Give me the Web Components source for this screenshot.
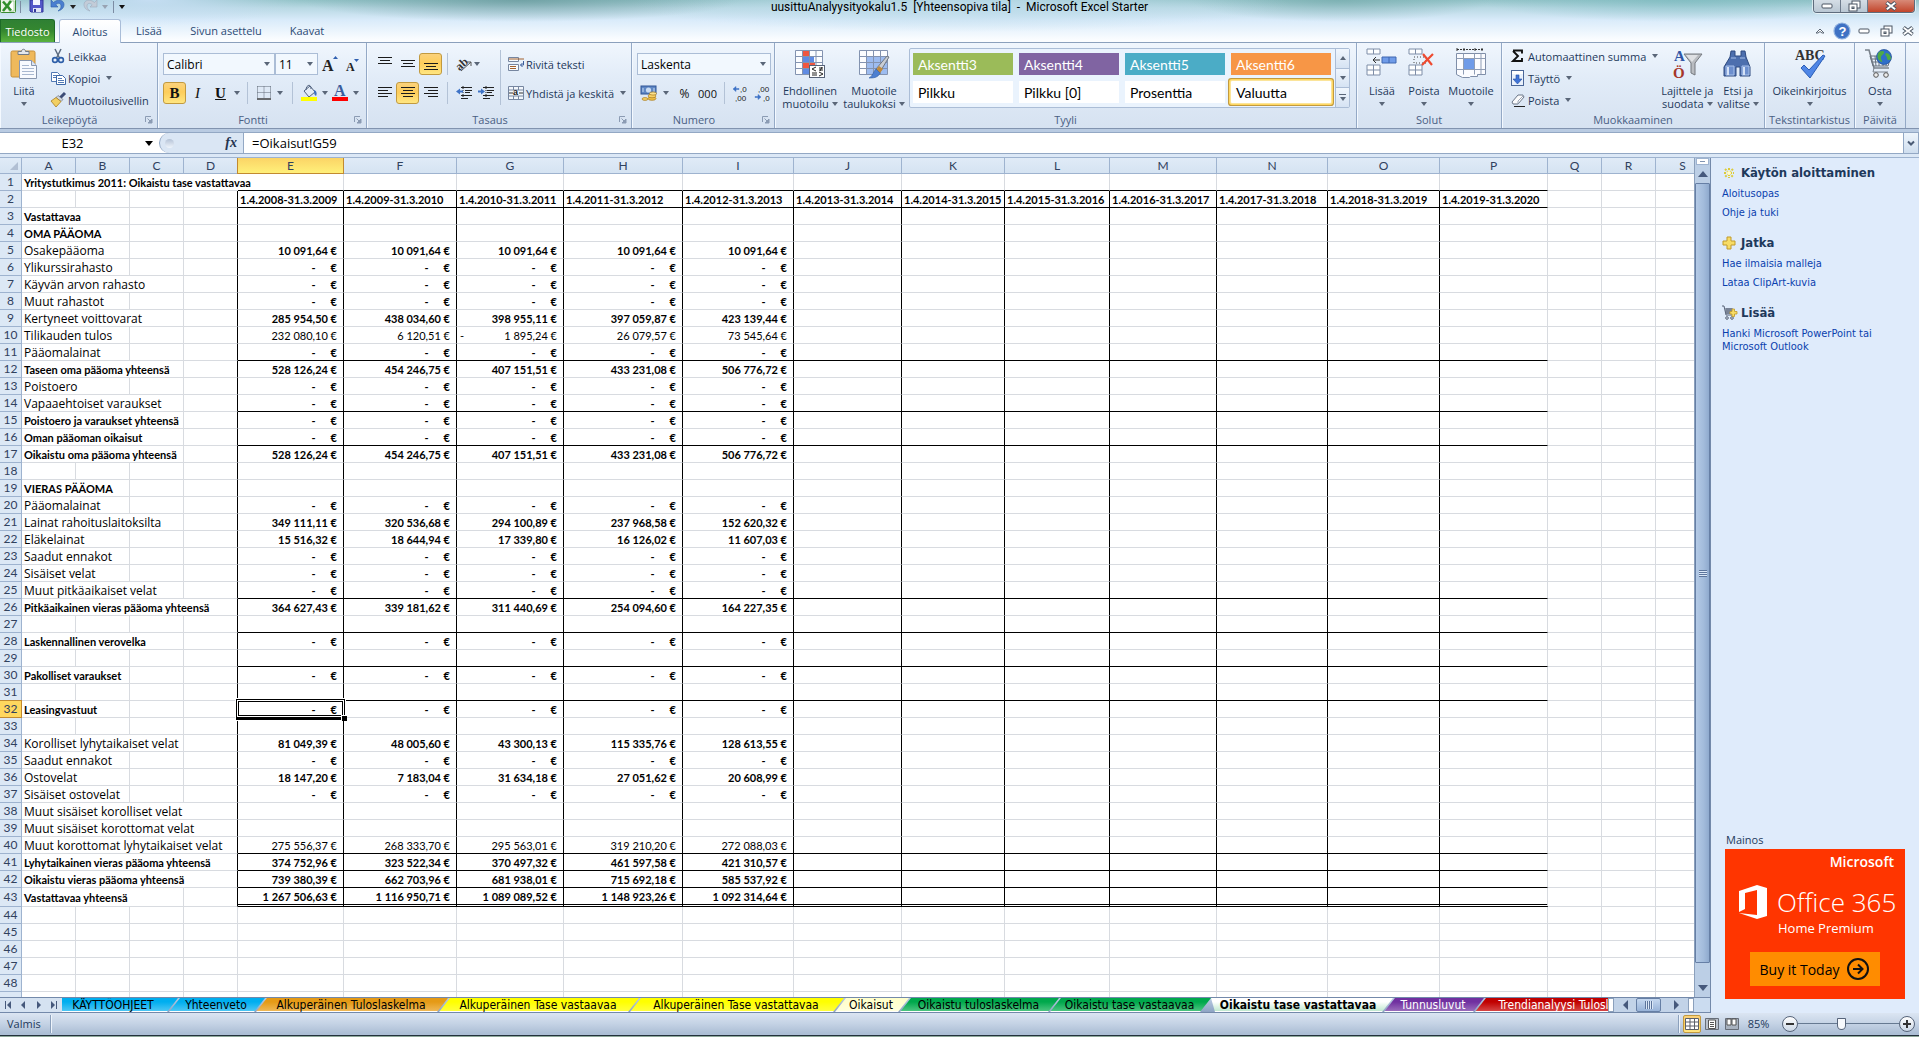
<!DOCTYPE html>
<html lang="fi">
<head>
<meta charset="utf-8">
<title>uusittuAnalyysityokalu1.5 - Microsoft Excel Starter</title>
<style>
html,body{height:100%;margin:0;overflow:hidden;background:#fff}
body{font-family:"Open Sans","Noto Sans",sans-serif;font-size:11px;color:#1e395b;
--ui:"Open Sans","Noto Sans",sans-serif;--cell:Lato,"Open Sans",sans-serif;--pane:"DejaVu Sans Condensed","DejaVu Sans",sans-serif;
--line:#8ba0bc;--gold:linear-gradient(#fbd27c,#fdcd5b 45%,#ffe681)}
</style>
</head>
<body>
<excel-window></excel-window>
<script>
const BASE = `
*{box-sizing:border-box}
button,select,input{font:inherit;color:inherit;margin:0;padding:0;border:0;background:none;outline:0}
button{display:flex;align-items:center;justify-content:center;white-space:nowrap}
.caret{display:inline-block;width:0;height:0;border:3px solid transparent;border-top:4px solid #5a6678;border-bottom:0;flex:none}
svg{display:block;overflow:visible}
`;
function define(name, css, html, extra) {
  const t = document.createElement('template');
  t.innerHTML = `<style>${BASE}${css}</style>${html}`;
  customElements.define(name, class extends HTMLElement {
    constructor() {
      super();
      this.attachShadow({mode: 'open'}).append(t.content.cloneNode(true));
    }
    connectedCallback() { if (extra && !this.ready) { this.ready = true; extra.call(this, this.shadowRoot); } }
  });
}

const lines = (ys) => ys.map(([y, a, b]) => `<path d="M${a} ${y}.5H${b}" stroke="#1b1b1b"/>`).join('');
const sheetRows = `<path d="M1 1h13v5H1zM1 17h13v10H1zM1 22h13M7.500 1v5M7.500 17v10" fill="#fdfeff" stroke="#7f8ea8"/>`;
const cart = `<path d="M1 2h4l5 18h15" fill="none" stroke="#7a828c" stroke-width="1.600"/><path d="M6 8h21l-3 10H9zM8 11h18M9 14h16M11 8l1 10M15 8v10M19 8v10M23 8l-1 10" fill="none" stroke="#68727e"/><path d="M10 20l-1 4h15" fill="none" stroke="#7a828c"/><circle cx="12" cy="27" r="2.300" fill="#eee" stroke="#555"/><circle cx="22" cy="27" r="2.300" fill="#eee" stroke="#555"/>`;
const ICONS = {
  excel: [16, 16, `<rect x=".5" y=".5" width="15" height="13" rx="1" fill="#e9f3e6" stroke="#3a8a33"/><path d="M9 2h5v10H9z" fill="#fff" stroke="#8bbf84" stroke-width=".7"/><path d="M3 2.500l8 9M11 2L3 12" stroke="#2f8f2b" stroke-width="2.600"/>`],
  save: [16, 16, `<path d="M2 1h13v12H3l-1-1z" fill="#5358c8" stroke="#34389a"/><path d="M5 1h7v5H5z" fill="#f2f5ff"/><path d="M5 9h8v4H5z" fill="#dfe4f5"/><path d="M6 10h2v3H6z" fill="#34389a"/>`],
  undo: [16, 16, `<path d="M1 1v7h7L5.800 5.800C8 3.500 11 4 11 7c0 2-1 3.500-3 5 4-1 6-3.500 6-6.500C14 1 8-.5 3.500 3.500z" fill="#4a7fd0" stroke="#2c5da8" stroke-width=".6"/>`],
  redo: [16, 16, `<path d="M15 1v7H8l2.200-2.200C8 3.500 5 4 5 7c0 2 1 3.500 3 5-4-1-6-3.500-6-6.500C2 1 8-.5 12.500 3.500z" fill="#c3ccd8" stroke="#9dabbd" stroke-width=".6"/>`],
  paste: [32, 32, `<rect x="3" y="3" width="24" height="26" rx="1.500" fill="#efb95c" stroke="#c58f3a"/><path d="M10 6.500V3.500h3.500c0-3 4-3 4 0H21v3z" fill="#e4e7ec" stroke="#717a87"/><path d="M11.500 12.500h12l5 5v13h-17z" fill="#f8fafe" stroke="#8896ae"/><path d="M23.500 12.500v5h5" fill="#dbe4f2" stroke="#8896ae"/><path d="M14 17.500h7M14 20.500h12M14 23.500h12M14 26.500h12" stroke="#a9b8d0"/>`],
  cut: [16, 16, `<path d="M5 1l4.500 9M11 1L6.500 10" stroke="#5b6b80" stroke-width="1.500" fill="none"/><circle cx="5" cy="12" r="2.400" fill="none" stroke="#2d5ea8" stroke-width="1.600"/><circle cx="11" cy="12" r="2.400" fill="none" stroke="#2d5ea8" stroke-width="1.600"/>`],
  copy: [16, 16, `<path d="M1.500 2.500h6l2 2v7h-8z" fill="#fff" stroke="#5179b4"/><path d="M3 5.500h4M3 7.500h5" stroke="#5179b4"/><path d="M6.500 5.500h6l3 3v6h-9z" fill="#fff" stroke="#3d68a8"/><path d="M8 8.500h4M8 10.500h6M8 12.500h6" stroke="#5179b4"/>`],
  brush: [16, 16, `<path d="M15 1l-5 5" stroke="#3c4c77" stroke-width="3"/><path d="M8 3.500l5 4-2 2-5-4z" fill="#cfd5de" stroke="#6a7382" stroke-width=".7"/><path d="M6 5.500L1 9l5 6 5-5.500z" fill="#f2cf62" stroke="#a87e22" stroke-width=".8"/>`],
  growA: [16, 16, `<text x="0" y="15" font-family="Liberation Serif" font-weight="bold" font-size="16" fill="#222">A</text><path d="M11 3l2.500-3L16 3z" fill="#2f5fb0"/>`],
  shrinkA: [16, 16, `<text x="1" y="15" font-family="Liberation Serif" font-weight="bold" font-size="12" fill="#222">A</text><path d="M9 3h5l-2.500 3z" fill="#2f5fb0"/>`],
  borders: [16, 16, `<path d="M1.500 1.500h13M1.500 1.500v12M14.500 1.500v12M8 1.500v12M1.500 7.500h13" stroke="#5c6675" stroke-dasharray="1 1" fill="none"/><path d="M1 14h14" stroke="#333" stroke-width="1.400"/>`],
  fill: [16, 18, `<path d="M3 7l6-5 5 6-6 5z" fill="#e3ebf5" stroke="#50617e"/><path d="M5 6c0-5 5-7 5-1" fill="none" stroke="#50617e"/><path d="M13 6c3 1 3 4 2 6-2-1-2-3-2-6z" fill="#3e6fbd"/><path d="M0 13h16v4H0z" fill="#ff0"/>`],
  fontA: [16, 18, `<text x="2" y="12" font-family="Liberation Serif" font-weight="bold" font-size="16" fill="#3b5d9c">A</text><path d="M0 13h16v4H0z" fill="red"/>`],
  atop: [16, 16, lines([[1, 1, 15], [4, 3, 13], [7, 1, 15]])],
  amid: [16, 16, lines([[4, 1, 15], [7, 3, 13], [10, 1, 15]])],
  abot: [16, 16, lines([[7, 1, 15], [10, 3, 13], [13, 1, 15]])],
  left: [16, 16, lines([[2, 1, 15], [5, 1, 11], [8, 1, 15], [11, 1, 11]])],
  center: [16, 16, lines([[2, 1, 15], [5, 3, 13], [8, 1, 15], [11, 3, 13]])],
  right: [16, 16, lines([[2, 1, 15], [5, 5, 15], [8, 1, 15], [11, 5, 15]])],
  orient: [16, 16, `<text x="0" y="12" transform="rotate(-42 6 9)" font-family="Liberation Serif" font-weight="bold" font-size="12" fill="#333">ab</text><path d="M5 15l10-9M11 6h4v4" fill="none" stroke="#555"/>`],
  outdent: [16, 16, `<path d="M5 2.500h11M9 5.500h7M9 7.500h5M5 10.500h11M5 13.500h7" stroke="#222"/><path d="M7 1v14" stroke="#222" stroke-dasharray="1 1"/><path d="M0 6.500l4-3v2h3v2H4v2z" fill="#3f73c6"/>`],
  indent: [16, 16, `<path d="M5 2.500h11M9 5.500h7M9 7.500h5M5 10.500h11M5 13.500h7" stroke="#222"/><path d="M8 1v14" stroke="#222" stroke-dasharray="1 1"/><path d="M7 6.500l-4-3v2H0v2h3v2z" fill="#3f73c6"/>`],
  wrap: [16, 16, `<path d="M.5 1.500h10v4h-10zM.5 8.500h10v6h-10z" fill="#f7fafd" stroke="#7686a0"/><path d="M1 3h15M2 10.500h6M2 12.500h6" stroke="#a3612c"/><path d="M15.500 5v4h-3l2-2M12.500 9l2 2" fill="none" stroke="#3b5d9c"/>`],
  merge: [16, 16, `<path d="M.5 1.500h15v13H.5zM.5 5h15M.5 11h15M5.500 1.500V5M10.500 1.500V5M5.500 11v3.500M10.500 11v3.500" fill="#f3f7fc" stroke="#7686a0"/><text x="5" y="10" font-family="Liberation Sans" font-weight="bold" font-size="9" fill="#222">a</text><path d="M1 8h4M11 8h4" stroke="#333"/>`],
  money: [18, 16, `<rect x="1" y="1" width="15" height="8" fill="#5f87c4" stroke="#2f5596"/><circle cx="8.500" cy="5" r="2.600" fill="#c9dcf3"/><path d="M3 3v4M14 3v4" stroke="#c9dcf3"/><ellipse cx="12" cy="13.500" rx="4" ry="1.800" fill="#f0bf45" stroke="#a77a1c" stroke-width=".7"/><ellipse cx="12" cy="11" rx="4" ry="1.800" fill="#f7d166" stroke="#a77a1c" stroke-width=".7"/><ellipse cx="13" cy="8.500" rx="3.500" ry="1.600" fill="#fbe08a" stroke="#a77a1c" stroke-width=".7"/><ellipse cx="5" cy="14" rx="3" ry="1.400" fill="#f7d166" stroke="#a77a1c" stroke-width=".7"/>`],
  decinc: [16, 16, `<path d="M0 4l3-2.500v2h3v1H3v2z" fill="#3f73c6" stroke="#3f73c6" stroke-width=".5"/><text x="7" y="7" font-size="8" font-family="Liberation Sans" fill="#222">,0</text><text x="2" y="16" font-size="8" font-family="Liberation Sans" fill="#222">,00</text>`],
  decdec: [16, 16, `<text x="3" y="7" font-size="8" font-family="Liberation Sans" fill="#222">,00</text><path d="M6 12l-3-2.500v2H0v1h3v2z" fill="#3f73c6" stroke="#3f73c6" stroke-width=".5"/><text x="8" y="16" font-size="8" font-family="Liberation Sans" fill="#222">,0</text>`],
  cond: [32, 32, `<path d="M1.500 2.500h27v24h-27z" fill="#fcfdff"/><path d="M8 2h7v6H8zM8 14h13v6H8z" fill="#f0563f"/><path d="M8 8h12v6H8zM8 20h7v7H8z" fill="#5f8be3"/><path d="M1.500 2.500h27v24h-27zM1.500 8.500h27M1.500 14.500h27M1.500 20.500h27M8.500 2.500v24M15.500 2.500v24M22 2.500v24" fill="none" stroke="#8393b0"/><rect x="15.500" y="17.500" width="15" height="12" fill="#fff" stroke="#566278"/><path d="M22 19l-4 2 4 2M18 25h5M18 27h5M25 20h4M25 22h4M28 19l-2 4M25 24l4 2-4 2" stroke="#222" fill="none"/>`],
  table: [32, 32, `<path d="M1.500 2.500h28v24h-28z" fill="#fcfdff"/><path d="M8 8h21v18H8z" fill="#9dbcf0"/><path d="M1.500 2.500h28v24h-28zM1.500 8.500h28M1.500 14.500h28M1.500 20.500h28M8.500 2.500v24M15.500 2.500v24M22.500 2.500v24" fill="none" stroke="#8393b0"/><path d="M29 8l2 1-9 15-4-3z" fill="#c9cdd3" stroke="#6f7680"/><path d="M21 18l4 3-3 4-4-3z" fill="#c08a3c"/><path d="M18 21l4 4c-2 5-7 5-11 5 4-2 4-6 7-9z" fill="#4c7fd1" stroke="#2f5da5" stroke-width=".6"/>`],
  insert: [32, 32, sheetRows + `<path d="M16 9h14v6H16zM23 9v6" fill="#6f9be8" stroke="#3e66b0"/><path d="M14 12H7m3-3l-3 3 3 3" stroke="#333" fill="none"/>`],
  del: [32, 32, sheetRows + `<path d="M6 9h12v6H6z" fill="none" stroke="#444" stroke-dasharray="1 2"/><path d="M15 6l9 11M25 6L14 17" stroke="#ee4a30" stroke-width="2.200"/>`],
  format: [32, 32, `<path d="M2 1.500h26" stroke="#333" stroke-dasharray="2 1"/><path d="M2 0v3M9 0v3M20 0v3M27 0v3" stroke="#333"/><path d="M1.500 5.500h29v21h-8v2h-7l-1 1h-7l-6-3z" fill="#fbfcff" stroke="#7f8ea8"/><path d="M9 11h10v10H9z" fill="#6f9be8"/><path d="M1.500 10.500h29M1.500 21.500h29M8.500 5.500v21M19.500 5.500v21M26 5.500v21" fill="none" stroke="#8f9db5"/>`],
  sigma: [16, 16, `<path d="M3 2.500h9v3M3 3l5 5-5 5h9v-3" fill="none" stroke="#111" stroke-width="1.900"/>`],
  down: [16, 16, `<rect x="1.500" y=".5" width="12" height="15" fill="#e9f1fc" stroke="#4a6698"/><path d="M2 1h11v3H2z" fill="#fff"/><path d="M6 5h3v4h3l-4.500 5L3 9h3z" fill="#3f73d6" stroke="#2550a5" stroke-width=".6"/>`],
  eraser: [16, 16, `<path d="M2 10l6-7h5l1 2-6 7H3z" fill="#fbfbfc" stroke="#6b7688"/><path d="M8 12V9l6-6" fill="none" stroke="#9aa5b5"/><path d="M4 14.500h11" stroke="#222"/>`],
  sort: [32, 32, `<text x="3" y="13" font-family="Liberation Serif" font-weight="bold" font-size="15" fill="#2f56a5">A</text><text x="2" y="30" font-family="Liberation Serif" font-weight="bold" font-size="15" fill="#a5352a">Ö</text><path d="M13 6h18l-7 9v12l-4-2V15z" fill="#b9bcc1" stroke="#75797f"/><path d="M15 7h12l-6 7z" fill="#dfe1e4"/>`],
  find: [32, 32, `<path d="M9 3h4v5h6V3h4l1 6 4 10v9H18v-9h-4v9H2v-9L8 9z" fill="#4d6fae" stroke="#2e4a80"/><path d="M9 10h5M18 10h5M4 18h8v9H4zM20 18h7v9h-7z" stroke="#a9c1ea" fill="#6d8fce"/><path d="M5 19h2v8H5zM21 19h2v8h-2z" fill="#d5e2f7"/>`],
  spell: [32, 32, `<text x="1" y="12" font-family="Liberation Serif" font-weight="bold" font-size="14" fill="#333">ABC</text><path d="M7 20l3-3 5 5L29 7l2 1-15 22z" fill="#4f86e6" stroke="#2a5cb5"/>`],
  buy: [32, 32, cart + `<circle cx="20" cy="9" r="7.500" fill="#2f6fc9" stroke="#1d4a94" stroke-width=".7"/><path d="M15 4c3-2 6-1 5 1s-3 2-3 5 2 2 1 4c-4-1-6-6-3-10zM22 5c3 0 5 3 5 6-2 2-4 1-4-1s-3-3-1-5z" fill="#4faa45"/>`],
  help: [18, 18, `<circle cx="9" cy="9" r="8" fill="#3f72c4" stroke="#8fb1e0" stroke-width="1.200"/><text x="5.500" y="14" font-family="Liberation Sans" font-weight="bold" font-size="13" fill="#fff">?</text>`],
  up: [12, 12, `<path d="M2 8l4-4 4 4H8L6 6.500 4 8z" fill="#fff" stroke="#5b6675"/>`],
  min: [12, 12, `<rect x="1" y="4" width="10" height="4" rx="1" fill="#fff" stroke="#4a5563"/>`],
  restore: [12, 12, `<rect x="4" y="1" width="8" height="7" fill="#fff" stroke="#4a5563"/><rect x="1" y="4" width="8" height="7" fill="#fff" stroke="#4a5563"/><rect x="4" y="7" width="2" height="1.500" fill="none" stroke="#4a5563"/>`],
  close: [12, 12, `<path d="M1.500 2.500L10.500 9.500M10.500 2.500L1.500 9.500" stroke="#4a5563" stroke-width="4"/><path d="M1.800 2.800L10.200 9.200M10.200 2.800L1.800 9.200" stroke="#fff" stroke-width="2"/>`],
  launch: [9, 9, `<path d="M1.500 7V1.500H7" fill="none" stroke="#8b9bb3"/><path d="M3.500 3.500l4 4M8 4v4H4z" fill="#8b9bb3" stroke="#8b9bb3"/>`],
  star: [14, 14, `<path d="M7 2v10M2 7h10M3 3l8 8M11 3l-8 8" stroke="#dccb3c" stroke-width="2" stroke-dasharray="2 1"/><circle cx="7" cy="7" r="2" fill="#fffbd0"/>`],
  plus: [14, 14, `<path d="M5 1h4v4h4v4H9v4H5V9H1V5h4z" fill="#f7dc66" stroke="#c19a2a"/>`],
  cartplus: [16, 16, `<path d="M0 1h2l2 9h9M3 4h8M3 6h8M4 8h7M5 3v6M7 3v6M9 3v6" fill="none" stroke="#566175"/><circle cx="5" cy="13" r="1.300" fill="none" stroke="#566175"/><circle cx="10" cy="13" r="1.300" fill="none" stroke="#566175"/><path d="M10 4h2.500v2.500H15V9h-2.500v2.500H10V9H8V6.500h2z" fill="#f7dc66" stroke="#c19a2a" stroke-width=".8"/>`],
  vnormal: [14, 12, `<path d="M.5.5h13v11H.5zM.5 4h13M.5 8h13M5 .5v11M9.500.5v11" fill="#fff" stroke="#5a5f68"/>`],
  vlayout: [14, 12, `<path d="M.5.5h13v11H.5z" fill="#b9c1cc" stroke="#666d78"/><path d="M3.500 2h7v8.500h-7z" fill="#fff" stroke="#555"/><path d="M5 4.500h4M5 6.500h4M5 8.500h4" stroke="#555"/>`],
  vbreak: [14, 12, `<path d="M.5.5h13v11H.5z" fill="#a8b2bf" stroke="#666d78"/><path d="M2 1h4v6H2zM7 1h4v6H7z" fill="#fff" stroke="#555"/>`],
  office: [30, 36, `<path d="M1 7L19 1l10 3v28l-10 3L1 29l18 2V6L7 9v16l-6 3z" fill="#fff"/>`],
  go: [24, 24, `<circle cx="12" cy="12" r="10" fill="none" stroke="#111" stroke-width="2"/><path d="M7 12h9M12 7.500l4.500 4.500-4.500 4.500" fill="none" stroke="#111" stroke-width="2"/>`]
};
const icon = (n) => { const [w, h, s] = ICONS[n]; return `<svg width="${w}" height="${h}" viewBox="0 0 ${w} ${h}" aria-hidden="true">${s}</svg>`; };
define('ui-icon', ':host{display:block;flex:none}', '', function (r) {
  r.innerHTML += icon(this.getAttribute('name'));
});

define('ribbon-group', `
:host{display:flex;flex-direction:column;flex:none;border-right:1px solid #94a9c6;box-shadow:inset 1px 0 #f4f9ff;padding-top:2px}
.body{display:flex;height:66px}
.foot{display:flex;height:17px;line-height:17px;align-items:center;color:#4a6084}
.foot span{flex:1;text-align:center}
.foot button{width:18px}
`, `<div class="body"><slot></slot></div><div class="foot"><span></span></div>`, function (r) {
  r.querySelector('span').textContent = this.getAttribute('label');
  if (this.hasAttribute('launcher')) {
    r.querySelector('.foot').insertAdjacentHTML('beforeend', `<button aria-label="Lisäasetukset">${icon('launch')}</button>`);
  }
});

define('big-button', `
:host{display:block;flex:none}
button{flex-direction:column;width:100%;padding-top:3px;justify-content:flex-start;line-height:13px}
.l{margin-top:4px;height:13px}
.m{height:13px;display:flex;align-items:center;gap:3px}
`, `<button></button>`, function (r) {
  r.querySelector('button').innerHTML = `${icon(this.getAttribute('icon'))}<span class="l">${this.getAttribute('label')}</span><span class="m">${this.getAttribute('more') || ''}<i class="caret"></i></span>`;
});

define('small-button', `
:host{display:block;height:22px}
button{height:100%;gap:2px}
.caret{margin-left:4px}
`, `<button></button>`, function (r) {
  r.querySelector('button').innerHTML = `${icon(this.getAttribute('icon'))}<span>${this.textContent}</span>${this.hasAttribute('menu') ? '<i class="caret"></i>' : ''}`;
});

define('combo-box', `
:host{display:block;position:relative;height:22px}
select{appearance:none;width:100%;height:100%;border:1px solid #abbdd6;background:#f2f8fe;padding-left:3px;color:#000;font-size:12px;border-radius:0}
.caret{position:absolute;right:5px;top:9px}
`, `<select></select><i class="caret"></i>`, function (r) {
  const s = r.querySelector('select');
  s.setAttribute('aria-label', this.getAttribute('label'));
  s.innerHTML = `<option>${this.getAttribute('value')}</option>`;
});

define('style-gallery', `
:host{display:flex;border:1px solid #abbdd6;border-radius:2px;background:#eaf3fd;height:60px}
.cells{display:grid;grid-template-columns:repeat(4,100px);grid-template-rows:22px 22px;gap:6px;padding:4px 4px 4px 3px;flex:1;font-family:var(--cell);font-size:14px}
.cells button{justify-content:flex-start;padding-left:5px;background:#fff;color:#000}
.cells .c{color:#fff}
.cells .sel{box-shadow:0 0 0 1px #fbe49a,0 0 0 2px #ffd863,0 0 0 3px #c29a3f;border-radius:1px}
.nav{display:flex;flex-direction:column;width:15px;border-left:1px solid #abbdd6}
.nav button{flex:1;border-bottom:1px solid #abbdd6;background:linear-gradient(#f0f6fd,#d6e3f3)}
.nav button:last-child{border:0;flex-direction:column;gap:2px}
.nav button:last-child::before{content:"";width:7px;height:1px;background:#5a6678}
.flip{transform:rotate(180deg)}
`, `<div class="cells"><button class="c" style="background:#9bbb59">Aksentti3</button><button class="c" style="background:#8064a2">Aksentti4</button><button class="c" style="background:#4bacc6">Aksentti5</button><button class="c" style="background:#f79646">Aksentti6</button><button>Pilkku</button><button>Pilkku [0]</button><button>Prosenttia</button><button class="sel">Valuutta</button></div>
<div class="nav"><button aria-label="Edellinen"><i class="caret flip"></i></button><button aria-label="Seuraava"><i class="caret"></i></button><button aria-label="Lisää tyylejä"><i class="caret"></i></button></div>`);

define('title-bar', `
:host{display:flex;flex-direction:column;height:42px;flex:none;background:
 radial-gradient(ellipse 150px 26px at 150px 0,rgba(200,223,245,.95),rgba(200,223,245,0)),
 radial-gradient(ellipse 220px 22px at 520px 0,rgba(90,140,142,.6),rgba(90,140,142,0)),
 radial-gradient(ellipse 330px 28px at 960px 4px,rgba(190,220,235,.95),rgba(190,220,235,0)),
 radial-gradient(ellipse 150px 22px at 1340px 0,rgba(110,165,165,.6),rgba(110,165,165,0)),
 radial-gradient(ellipse 200px 22px at 1680px 0,rgba(120,185,190,.6),rgba(120,185,190,0)),
 linear-gradient(#93c3c8,#b9d9e4 8px,#d9ebfa 20px,#fbfdff 40px)}
.top{display:flex;height:19px;justify-content:space-between;align-items:flex-start}
.qat{display:flex;align-items:center;width:260px;height:13px}
.qat button{height:16px}
.sep{width:1px;height:12px;background:#7c8ca3}
h1{margin:0;font:12px/15px Roboto,var(--ui);color:#000;white-space:pre}
.win{display:flex;justify-content:flex-end;width:260px;padding-right:4px}
.win div{display:flex;border:1px solid #5e6c7d;border-top:0;border-radius:0 0 4px 4px;overflow:hidden;box-shadow:0 0 0 1px rgba(255,255,255,.6)}
.win button{width:27px;height:12px;overflow:hidden;background:linear-gradient(#d5dee6,#b9c7d3);border-right:1px solid #6d7b8c}
.win button:last-child{width:46px;border:0;background:linear-gradient(#d88a78,#c2452b)}
.tabs{display:flex;flex:1;align-items:stretch}
.tabs nav{display:flex;flex:1}
.tabs nav button{color:#2b4a74}
.tabs nav .file{width:55px;background:linear-gradient(#2f8034,#35882f 50%,#5ab33e);color:#fff;border:1px solid #1d6a27;border-bottom:0;border-radius:0 3px 0 0}
.tabs nav .on{width:62px;margin-left:4px;margin-right:7px;background:linear-gradient(#fff,#f0f6fd);border:1px solid #a9bdd8;border-bottom:0;border-radius:3px 3px 0 0;position:relative;z-index:1;margin-bottom:-1px}
.help{display:flex;gap:10px;align-items:center;padding-right:5px}
`, `<div class="top"><div class="qat">${icon('excel')}<span class="sep" style="margin:0 7px 0 4px"></span><button aria-label="Tallenna">${icon('save')}</button><button aria-label="Kumoa" style="margin:0 4px 0 6px">${icon('undo')}</button><i class="caret" style="border-top-color:#222"></i><button aria-label="Tee uudelleen" style="margin:0 4px 0 6px">${icon('redo')}</button><i class="caret" style="border-top-color:#98a3b2"></i><span class="sep" style="margin:0 5px"></span><i class="caret" style="border-top-color:#111"></i></div>
<h1>uusittuAnalyysityokalu1.5  [Yhteensopiva tila]  -  Microsoft Excel Starter</h1>
<div class="win"><div><button aria-label="Pienennä">${icon('min')}</button><button aria-label="Palauta">${icon('restore')}</button><button aria-label="Sulje">${icon('close')}</button></div></div></div>
<div class="tabs"><nav><button class="file">Tiedosto</button><button class="on">Aloitus</button><button style="width:42px">Lisää</button><button style="width:110px;margin:0 1px">Sivun asettelu</button><button style="width:50px">Kaavat</button></nav>
<div class="help"><button aria-label="Pienennä valintanauha">${icon('up')}</button><button aria-label="Ohje" style="margin:0 -3px">${icon('help')}</button><button aria-label="Pienennä ikkuna">${icon('min')}</button><button aria-label="Palauta ikkuna">${icon('restore')}</button><button aria-label="Sulje ikkuna">${icon('close')}</button></div></div>`);

define('ribbon-bar', `
:host{display:flex;height:87px;flex:none;border-top:1px solid #8ba0bc;border-bottom:1px solid #8193af;background:linear-gradient(#f0f6fd,#e2ecf8 40%,#d6e2f1)}
.col{display:flex;flex-direction:column}
.rows{display:flex;flex-direction:column;gap:7px;padding-top:8px}
.row{display:flex;align-items:center;height:22px}
.t{width:23px;height:22px;border-radius:3px;color:#111}
.on{background:var(--gold);border:1px solid #c29a3f}
.sep{width:1px;height:22px;background:#b3c2d6;flex:none;margin:0 8px 0 5px}
.c{width:15px;display:flex;justify-content:center}
.ser{font-family:"Liberation Serif",serif;font-size:15px}
`, `
<ribbon-group label="Leikepöytä" launcher style="width:158px"><big-button icon="paste" label="Liitä" style="width:44px;margin:0 4px 0 2px"></big-button>
 <div class="col"><small-button icon="cut">Leikkaa</small-button><small-button icon="copy" menu>Kopioi</small-button><small-button icon="brush">Muotoilusivellin</small-button></div></ribbon-group>
<ribbon-group label="Fontti" launcher style="width:209px"><div class="rows" style="padding-left:5px">
 <div class="row"><combo-box label="Fontti" value="Calibri" style="width:112px"></combo-box><combo-box label="Koko" value="11" style="width:43px"></combo-box><button class="t" aria-label="Suurenna">${icon('growA')}</button><button class="t" aria-label="Pienennä">${icon('shrinkA')}</button></div>
 <div class="row"><button class="t on ser"><b>B</b></button><button class="t ser"><i>I</i></button><button class="t ser"><b><u>U</u></b></button><span class="c" style="width:10px"><i class="caret"></i></span><span class="sep"></span><button aria-label="Reunat">${icon('borders')}</button><span class="c"><i class="caret"></i></span><span class="sep"></span><button aria-label="Täyttöväri">${icon('fill')}</button><span class="c"><i class="caret"></i></span><button aria-label="Fontin väri">${icon('fontA')}</button><span class="c"><i class="caret"></i></span></div></div></ribbon-group>
<ribbon-group label="Tasaus" launcher style="width:265px"><div class="rows" style="padding-left:6px">
 <div class="row"><button class="t" aria-label="Ylös">${icon('atop')}</button><button class="t" aria-label="Keskelle">${icon('amid')}</button><button class="t on" aria-label="Alas">${icon('abot')}</button><span class="sep"></span><button aria-label="Suunta">${icon('orient')}</button><i class="caret" style="margin-left:2px"></i></div>
 <div class="row"><button class="t" aria-label="Vasen">${icon('left')}</button><button class="t on" aria-label="Keskitä">${icon('center')}</button><button class="t" aria-label="Oikea">${icon('right')}</button><span class="sep"></span><button aria-label="Pienennä sisennystä">${icon('outdent')}</button><button aria-label="Suurenna sisennystä" style="margin-left:6px">${icon('indent')}</button></div></div>
 <span class="sep" style="height:55px;margin:5px 7px 0 6px"></span>
 <div class="rows"><small-button icon="wrap">Rivitä teksti</small-button><small-button icon="merge" menu>Yhdistä ja keskitä</small-button></div></ribbon-group>
<ribbon-group label="Numero" launcher style="width:143px"><div class="rows" style="padding-left:5px">
 <combo-box label="Lukumuoto" value="Laskenta" style="width:134px"></combo-box>
 <div class="row"><button aria-label="Valuutta" style="margin-left:3px">${icon('money')}</button><span class="c"><i class="caret"></i></span><button class="t" style="font-size:12px">%</button><button class="t">000</button><span class="sep"></span><button aria-label="Lisää desimaaleja" style="margin-right:6px">${icon('decinc')}</button><button aria-label="Vähennä desimaaleja">${icon('decdec')}</button></div></div></ribbon-group>
<ribbon-group label="Tyyli" style="width:582px"><big-button icon="cond" label="Ehdollinen" more="muotoilu" style="width:64px;margin-left:3px"></big-button><big-button icon="table" label="Muotoile" more="taulukoksi" style="width:64px;margin-right:3px"></big-button><style-gallery style="width:441px;margin-top:3px"></style-gallery></ribbon-group>
<ribbon-group label="Solut" style="width:145px"><big-button icon="insert" label="Lisää" style="width:42px;margin-left:4px"></big-button><big-button icon="del" label="Poista" style="width:42px"></big-button><big-button icon="format" label="Muotoile" style="width:52px"></big-button></ribbon-group>
<ribbon-group label="Muokkaaminen" style="width:263px"><div class="col" style="padding-left:8px;flex:1"><small-button icon="sigma" menu>Automaattinen summa</small-button><small-button icon="down" menu>Täyttö</small-button><small-button icon="eraser" menu>Poista</small-button></div><big-button icon="sort" label="Lajittele ja" more="suodata" style="width:58px"></big-button><big-button icon="find" label="Etsi ja" more="valitse" style="width:44px;margin-right:4px"></big-button></ribbon-group>
<ribbon-group label="Tekstintarkistus" style="width:90px"><big-button icon="spell" label="Oikeinkirjoitus" style="width:89px"></big-button></ribbon-group>
<ribbon-group label="Päivitä" style="width:51px"><big-button icon="buy" label="Osta" style="width:50px"></big-button></ribbon-group>`);

define('formula-bar', `
:host{display:flex;flex:none;height:29px;background:#dce8f6;border-top:3px solid #b9cbe2;border-bottom:1px solid #9eb3cf}
.in{display:flex;flex:1;height:22px;border:solid #93a8c4;border-width:1px 0;background:#fff;font-size:13px;color:#000}
.name{width:159px;display:flex;align-items:center;padding-right:6px}
.name input{flex:1;min-width:0;text-align:center;padding-left:0}
.mid{width:85px;border:1px solid #93a8c4;border-width:0 1px;border-radius:10px 0 0 10px;background:#dae6f4;display:flex;align-items:center;justify-content:space-between;padding:0 6px 0 5px}
.dot{width:9px;height:9px;border-radius:50%;background:linear-gradient(#b4c2d6,#eff5fc)}
.fx{font:italic bold 14px "Liberation Serif",serif;color:#24344f}
.f{flex:1;min-width:0;padding-left:8px}
.x{width:16px;background:linear-gradient(#eef5fc,#cfdeef);border:1px solid #93a8c4;border-width:0 1px}
`, `<div class="in"><div class="name"><input aria-label="Nimiruutu" value="E32"><i class="caret" style="border-top-color:#000;border-width:5px 4px 0"></i></div><div class="mid"><span class="dot"></span><button class="fx" aria-label="Lisää funktio">fx</button></div><input class="f" aria-label="Kaavarivi" value="=Oikaisut!G59"><button class="x" aria-label="Laajenna kaavarivi"><svg width="8" height="7"><path d="M1 1.500l3 3 3-3" fill="none" stroke="#4b5b75" stroke-width="2"/></svg></button></div>`);

const COLS = [22, 54, 54, 54, 54, 106, 113, 107, 119, 111, 108, 103, 105, 107, 111, 112, 108, 54, 54, 54];
const D = '-', Z = [D, D, D, D, D];
const HEAD = ['1.4.2008-31.3.2009', '1.4.2009-31.3.2010', '1.4.2010-31.3.2011', '1.4.2011-31.3.2012', '1.4.2012-31.3.2013', '1.4.2013-31.3.2014', '1.4.2014-31.3.2015', '1.4.2015-31.3.2016', '1.4.2016-31.3.2017', '1.4.2017-31.3.2018', '1.4.2018-31.3.2019', '1.4.2019-31.3.2020'];
/* row number: [label, bold label, columns covered, values, light values] */
const ROWS = {
  1: ['Yritystutkimus 2011: Oikaistu tase vastattavaa', 1, 5],
  3: ['Vastattavaa', 1, 2], 4: ['OMA PÄÄOMA', 1, 2],
  5: ['Osakepääoma', 0, 2, ['10 091,64', '10 091,64', '10 091,64', '10 091,64', '10 091,64']],
  6: ['Ylikurssirahasto', 0, 2, Z], 7: ['Käyvän arvon rahasto', 0, 3, Z], 8: ['Muut rahastot', 0, 2, Z],
  9: ['Kertyneet voittovarat', 0, 3, ['285 954,50', '438 034,60', '398 955,11', '397 059,87', '423 139,44']],
  10: ['Tilikauden tulos', 0, 2, ['232 080,10', '6 120,51', '-1 895,24', '26 079,57', '73 545,64'], 1],
  11: ['Pääomalainat', 0, 2, Z],
  12: ['Taseen oma pääoma yhteensä', 1, 3, ['528 126,24', '454 246,75', '407 151,51', '433 231,08', '506 776,72']],
  13: ['Poistoero', 0, 2, Z], 14: ['Vapaaehtoiset varaukset', 0, 3, Z],
  15: ['Poistoero ja varaukset yhteensä', 1, 3, Z], 16: ['Oman pääoman oikaisut', 1, 3, Z],
  17: ['Oikaistu oma pääoma yhteensä', 1, 3, ['528 126,24', '454 246,75', '407 151,51', '433 231,08', '506 776,72']],
  19: ['VIERAS PÄÄOMA', 1, 2], 20: ['Pääomalainat', 0, 2, Z],
  21: ['Lainat rahoituslaitoksilta', 0, 3, ['349 111,11', '320 536,68', '294 100,89', '237 968,58', '152 620,32']],
  22: ['Eläkelainat', 0, 2, ['15 516,32', '18 644,94', '17 339,80', '16 126,02', '11 607,03']],
  23: ['Saadut ennakot', 0, 2, Z], 24: ['Sisäiset velat', 0, 2, Z], 25: ['Muut pitkäaikaiset velat', 0, 3, Z],
  26: ['Pitkäaikainen vieras pääoma yhteensä', 1, 4, ['364 627,43', '339 181,62', '311 440,69', '254 094,60', '164 227,35']],
  28: ['Laskennallinen verovelka', 1, 3, Z], 30: ['Pakolliset varaukset', 1, 2, Z], 32: ['Leasingvastuut', 1, 2, Z],
  34: ['Korolliset lyhytaikaiset velat', 0, 3, ['81 049,39', '48 005,60', '43 300,13', '115 335,76', '128 613,55']],
  35: ['Saadut ennakot', 0, 2, Z],
  36: ['Ostovelat', 0, 2, ['18 147,20', '7 183,04', '31 634,18', '27 051,62', '20 608,99']],
  37: ['Sisäiset ostovelat', 0, 2, Z],
  38: ['Muut sisäiset korolliset velat', 0, 4], 39: ['Muut sisäiset korottomat velat', 0, 4],
  40: ['Muut korottomat lyhytaikaiset velat', 0, 4, ['275 556,37', '268 333,70', '295 563,01', '319 210,20', '272 088,03'], 1],
  41: ['Lyhytaikainen vieras pääoma yhteensä', 1, 4, ['374 752,96', '323 522,34', '370 497,32', '461 597,58', '421 310,57']],
  42: ['Oikaistu vieras pääoma yhteensä', 1, 4, ['739 380,39', '662 703,96', '681 938,01', '715 692,18', '585 537,92']],
  43: ['Vastattavaa yhteensä', 1, 3, ['1 267 506,63', '1 116 950,71', '1 089 089,52', '1 148 923,26', '1 092 314,64']]
};
const RULED = new Set([1, 2, 11, 14, 16, 25, 27, 29, 31, 40, 41, 42]);
function tableHTML() {
  let h = '<table><colgroup>' + COLS.map(w => `<col style="width:${w}px">`).join('') + '</colgroup><thead><tr><th class="corner"><svg width="21" height="15"><path d="M18 4v8h-8z" fill="#b1bfd3"/></svg></th>';
  for (const c of 'ABCDEFGHIJKLMNOPQRS') h += `<th scope="col"${c === 'E' ? ' class="cur"' : ''}>${c}</th>`;
  h += '</tr></thead><tbody>';
  for (let n = 1; n <= 49; n++) {
    const [label, bold, covered, vals, light] = ROWS[n] || [];
    const span = n === 1 ? 4 : covered;
    h += `<tr${n === 43 ? ' class="total"' : ''}><th scope="row"${n === 32 ? ' class="cur"' : ''}>${n < 49 ? n : ''}</th>`;
    let c = 1;
    if (label) { h += `<td colspan="${span}" class="lab${bold ? ' b' : ''}${span >= 4 && n > 1 ? ' v' : ''}${n === 1 ? ' t' : ''}">${label}</td>`; c = span + 1; }
    for (; c <= 19; c++) {
      const inside = c >= 5 && c <= 16, k = [];
      if (n > 1 && n < 44 && c >= 4 && c <= 15) k.push('v');
      if (inside && RULED.has(n)) k.push('h');
      if (inside && n === 43) k.push('dbl');
      let t = '';
      if (n === 2 && inside) { k.push('hd'); t = HEAD[c - 5]; }
      if (vals && c >= 5 && c <= 9) {
        let v = vals[c - 5];
        k.push('n');
        if (light) k.push('lt');
        if (v === D) t = '<span class="z"><span>-</span><span>€</span></span>';
        else if (v[0] === '-') t = `<span class="neg"><span>-</span><span>${v.slice(1)} €</span></span>`;
        else t = v + ' €';
        if (n === 32 && c === 5) { k.push('sel'); t += '<i></i>'; }
      }
      h += `<td class="${k.join(' ')}">${t}</td>`;
    }
    h += '</tr>';
  }
  return h + '</tbody></table>';
}
define('sheet-grid', `
:host{display:block;overflow:hidden;flex:1;min-width:0;background:#fff;color:#000}
table{border-collapse:separate;border-spacing:0;table-layout:fixed;width:1602px;font:11px/14px var(--cell)}
th,td{padding:0;border:solid #d8dbe0;border-width:0 1px 1px 0;height:17px;white-space:nowrap;vertical-align:middle}
td{padding-top:2px}
th{font-weight:400;font-size:12px;line-height:16px;color:#30415e;background:#dce8f5;border-color:#9eb3cf;text-align:center}
thead th{height:16px;line-height:15px;background:linear-gradient(#e0ebf7,#d5e3f2)}
.cur{background:#ffd75e;border-color:#c28a30}
thead .cur{background:linear-gradient(#fbd466,#fff07a);box-shadow:-1px 0 #c28a30}
tbody .cur{box-shadow:0 -1px #c28a30}
.lab{padding-left:2px;font-family:var(--ui);font-size:12px}
.b{font-weight:700;font-family:var(--cell);font-size:11px}
.hd{font-weight:700;padding-left:2px}
.n{text-align:right;padding-right:6px;font-weight:700}
.lt{font-weight:400}
.v{border-right-color:#000}
.h{border-bottom-color:#000}
.t{border-right-color:transparent}
.dbl{border-bottom:3px double #000}
.total td,.total th{height:19px}
.z{display:flex;justify-content:flex-end;gap:15px}
.neg{display:flex;justify-content:space-between;padding-left:3px}
.sel{position:relative}
.sel i{position:absolute;inset:-2px -2px -3px;border:1px solid #000;border-bottom-width:3px;outline:1px solid #fff;box-shadow:inset 0 0 0 1px #fff,inset 0 0 0 2px #000}
.sel i::after{content:"";position:absolute;right:-3px;bottom:-4px;width:5px;height:5px;background:#000;border:solid #fff;border-width:1px 0 0 1px}
`, tableHTML());

define('v-scroll', `
:host{display:flex;flex-direction:column;width:16px;flex:none;background:#bccfe6;border-left:1px solid #8ba0bc}
.split{height:7px;margin:0 1px;background:#fff;border:1px solid #9eb3cf;display:flex;align-items:center}
.split::before{content:"";height:1px;background:#8295b2;flex:1;margin:0 3px}
button{height:18px}
.thumb{flex:1;background:linear-gradient(90deg,#b4cae6,#a2bbdb 60%,#8faace);border:1px solid #667fa5;border-radius:1px;display:flex;align-items:center;justify-content:center}
.thumb::before{content:"";width:8px;height:7px;background:repeating-linear-gradient(#5d759c 0 1px,#dbe8f7 1px 2px)}
.rest{height:16px}
.caret{border-width:6px 5px 0;border-top-color:#46597c}
.flip{transform:rotate(180deg)}
`, `<div class="split"></div><button aria-label="Ylös"><i class="caret flip"></i></button><div class="thumb"></div><div class="rest"></div><button aria-label="Alas"><i class="caret"></i></button>`);

const TABS = [
  ['KÄYTTÖOHJEET', 116, '#00aeef', '#4cc6f4', '#000'], ['Yhteenveto', 98, '#00aeef', '#4cc6f4', '#000'],
  ['Alkuperäinen Tuloslaskelma', 194, '#e59a16', '#efb856', '#000'], ['Alkuperäinen Tase vastaavaa', 202, '#ff0', '#ffff3c', '#000'],
  ['Alkuperäinen Tase vastattavaa', 216, '#ff0', '#ffff3c', '#000'], ['Oikaisut', 76, '#ffffcc', '#ffffdd', '#000'],
  ['Oikaistu tuloslaskelma', 161, '#00a84c', '#4cc580', '#000'], ['Oikaistu tase vastaavaa', 163, '#00a84c', '#4cc580', '#000'],
  ['Oikaistu tase vastattavaa', 182, '#fff', '#bfe8cf', '#000'], ['Tunnusluvut', 102, '#7030a0', '#9a6cbc', '#fff'],
  ['Trendianalyysi Tuloslaskelma', 206, '#c00000', '#d64545', '#fff']];
define('sheet-tabs', `
:host{display:flex;height:16px;flex:none;background:#c2d3e8;border-top:1px solid #7389aa;border-bottom:1px solid #7389aa}
.nav{display:flex;width:62px;flex:none;justify-content:space-around;background:#d5e2f1}
.strip{display:flex;flex:1;min-width:0;overflow:hidden;background:linear-gradient(#b9cae2,#8ea4c4)}
.strip button{flex:none;font:12px/14px var(--pane);clip-path:polygon(13px 0,100% 0,calc(100% - 11px) 100%,2px 100%);margin-left:-11px;border-bottom:1px solid #fff}
.strip button:first-child{clip-path:polygon(0 0,100% 0,calc(100% - 11px) 100%,0 100%);margin-left:0;padding-right:14px}
.strip .on{font-weight:700;margin-left:0;padding-right:8px;clip-path:polygon(0 0,100% 0,calc(100% - 11px) 100%,4px 100%)}
.h{display:flex;width:86px;flex:none;align-items:stretch;justify-content:space-between;background:#c2d3e8}
.s{width:6px;background:#fff;border:1px solid #8ba0bc}
.h button{width:14px}
.thumb{width:25px;background:linear-gradient(#c5d8f0,#98b3d8);border:1px solid #667fa5;border-radius:2px;display:flex;align-items:center;justify-content:center}
.thumb::before{content:"";width:8px;height:8px;background:repeating-linear-gradient(90deg,#5d759c 0 1px,#dbe8f7 1px 2px)}
.c{width:16px;background:#cbdcf0}
`, `<div class="nav"><button aria-label="Ensimmäinen"><svg width="7" height="8"><path d="M.5 0v8" stroke="#46597c"/><path d="M6 0v8L2 4z" fill="#46597c"/></svg></button><button aria-label="Edellinen"><svg width="5" height="8"><path d="M4 0v8L0 4z" fill="#46597c"/></svg></button><button aria-label="Seuraava"><svg width="5" height="8"><path d="M1 0v8l4-4z" fill="#46597c"/></svg></button><button aria-label="Viimeinen"><svg width="7" height="8"><path d="M6.500 0v8" stroke="#46597c"/><path d="M1 0v8l4-4z" fill="#46597c"/></svg></button></div>
<div class="strip">${TABS.map(([t, w, a, b, c], i) => `<button${i === 8 ? ' class="on"' : ''} style="width:${w}px;background:linear-gradient(${a} 30%,${b});color:${c}">${t}</button>`).join('')}</div>
<div class="h"><span class="s"></span><button aria-label="Vasemmalle"><svg width="5" height="10"><path d="M5 0v10L0 5z" fill="#46597c"/></svg></button><span class="thumb"></span><span></span><button aria-label="Oikealle"><svg width="5" height="10"><path d="M0 0v10l5-5z" fill="#46597c"/></svg></button><span class="s"></span></div><div class="c"></div>`);

define('office-ad', `
:host{display:flex;flex-direction:column;width:180px;height:150px;background:#ff3500;color:#fff;font-family:var(--ui)}
.ms{font-size:14px;line-height:18px;font-weight:600;text-align:right;padding:4px 11px 0 0}
.lg{display:flex;align-items:center;gap:9px;padding:13px 0 0 13px;height:49px;font-weight:300;font-size:26px;line-height:36px;white-space:nowrap}
.hp{font-size:13px;line-height:16px;padding-left:53px}
button{margin:16px 0 0 25px;width:130px;height:34px;background:#ff8c00;color:#000;font-size:14px;gap:7px}
`, `<div class="ms">Microsoft</div><div class="lg">${icon('office')}<span>Office 365</span></div><div class="hp">Home Premium</div><button>Buy it Today${icon('go')}</button>`);

define('task-pane', `
:host{display:flex;flex-direction:column;width:209px;flex:none;border-left:1px solid #7389aa;background:#dfebfb;padding:5px 0 14px 11px;font:11px/13px var(--pane);color:#1e395b}
section{margin-bottom:8px}
h2{display:flex;align-items:center;gap:3px;margin:0;font-size:13px;line-height:20px;height:20px;white-space:nowrap}
h2 ui-icon{width:16px}
a{display:block;color:#0a3fae;text-decoration:none;margin:4px 0 6px}
p{margin:auto 0 0 4px;font-family:var(--ui);line-height:19px}
office-ad{margin-left:3px}
`, `<section><h2><ui-icon name="star"></ui-icon>Käytön aloittaminen</h2><a href="#">Aloitusopas</a><a href="#">Ohje ja tuki</a></section>
<section><h2><ui-icon name="plus"></ui-icon>Jatka</h2><a href="#">Hae ilmaisia malleja</a><a href="#">Lataa ClipArt-kuvia</a></section>
<section><h2><ui-icon name="cartplus"></ui-icon>Lisää</h2><a href="#">Hanki Microsoft PowerPoint tai<br>Microsoft Outlook</a></section>
<p>Mainos</p><office-ad></office-ad>`);

define('status-bar', `
:host{display:flex;height:24px;flex:none;align-items:center;background:linear-gradient(#dbe5f2,#c5d3e5 45%,#adbfd6 20px,#adbfd6);border-bottom:1px solid #8fa99b;box-shadow:inset 0 -1px #23303c;padding:0 4px 2px 7px}
.sep{width:1px;height:18px;background:#8ba0bc;box-shadow:1px 0 #eef4fb;margin-right:4px}
.first{margin:0 auto 0 9px}
.v{width:18px;height:18px;margin-right:2px}
.on{background:var(--gold);border:1px solid #c29a3f;border-radius:2px}
.z{width:25px;margin:0 11px 0 3px}
.r{width:16px;height:16px;border-radius:50%;border:1px solid #56647a;background:linear-gradient(#fff,#cbd7e6);color:#333}
input{appearance:none;width:101px;height:16px;background:linear-gradient(#667991,#667991) center/100% 1px no-repeat}
input::-webkit-slider-thumb{appearance:none;width:9px;height:12px;background:#f6f9fd;border:1px solid #56647a;border-radius:1px 1px 5px 5px}
`, `<span>Valmis</span><span class="sep first"></span><span class="sep"></span><button class="v on" aria-label="Normaali">${icon('vnormal')}</button><button class="v" aria-label="Sivun asettelu">${icon('vlayout')}</button><button class="v" aria-label="Sivunvaihdot">${icon('vbreak')}</button><button class="z">85%</button><button class="r" aria-label="Loitonna"><svg width="8" height="8"><path d="M0 4h8" stroke="#333" stroke-width="2"/></svg></button><input type="range" aria-label="Zoomaus" min="0" max="100" value="42"><button class="r" aria-label="Lähennä"><svg width="8" height="8"><path d="M0 4h8M4 0v8" stroke="#333" stroke-width="2"/></svg></button>`);

define('excel-window', `
:host{display:flex;flex-direction:column;height:100vh;overflow:hidden}
main{display:flex;flex:1;min-height:0}
.work{display:flex;flex-direction:column;flex:1;min-width:0}
.view{display:flex;flex:1;min-height:0}
`, `<title-bar></title-bar><ribbon-bar></ribbon-bar><formula-bar></formula-bar><main><div class="work"><div class="view"><sheet-grid></sheet-grid><v-scroll></v-scroll></div><sheet-tabs></sheet-tabs></div><task-pane></task-pane></main><status-bar></status-bar>`);
</script>
</body>
</html>
